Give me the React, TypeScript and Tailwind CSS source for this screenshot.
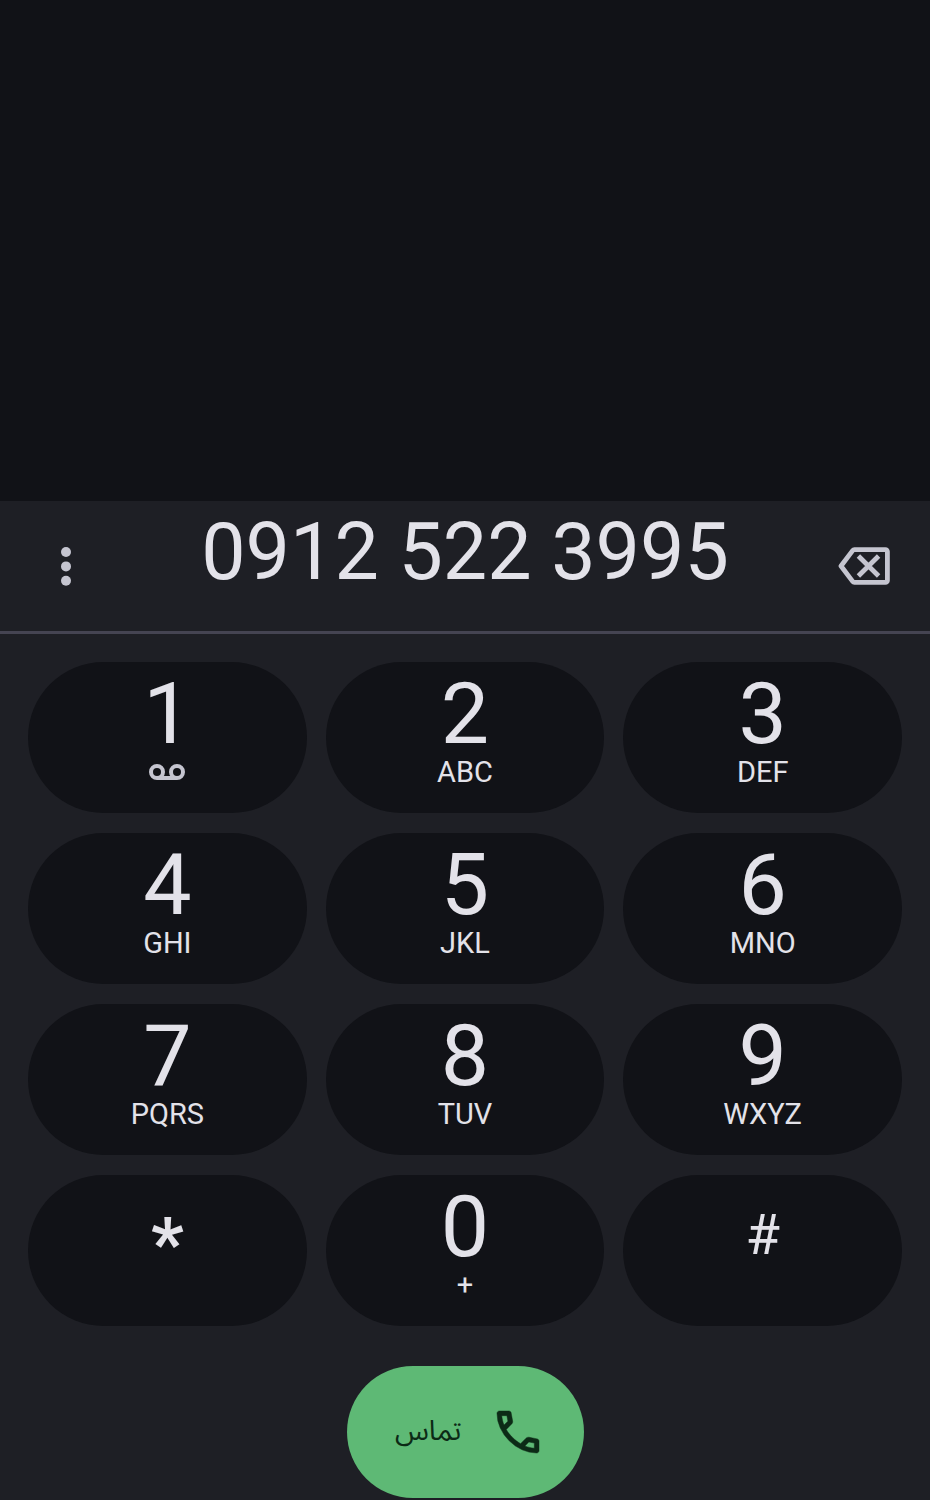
import React, { useState } from "react";

type Key = {
  digit: string;
  label?: React.ReactNode;
  name?: string;
};

const VoicemailIcon = () => (
  <svg
    className="h-4 w-9 text-[#c5c5d0]"
    viewBox="0 0 36 16"
    fill="none"
    stroke="currentColor"
    strokeWidth="4"
    aria-hidden="true"
  >
    <circle cx="8" cy="8" r="6" />
    <circle cx="28" cy="8" r="6" />
    <path d="M8 14h20" />
  </svg>
);

const MoreIcon = () => (
  <svg className="h-10 w-10" viewBox="0 0 40 40" fill="currentColor" aria-hidden="true">
    <circle cx="20" cy="6" r="5" />
    <circle cx="20" cy="20.4" r="5" />
    <circle cx="20" cy="34.8" r="5" />
  </svg>
);

const BackspaceIcon = () => (
  <svg
    className="h-[38px] w-[52px]"
    viewBox="0 0 52 38"
    fill="none"
    stroke="currentColor"
    strokeWidth="4.8"
    strokeLinejoin="round"
    aria-hidden="true"
  >
    <path d="M16.4 2.6H47.4a2 2 0 0 1 2 2V33.4a2 2 0 0 1-2 2H16.4a2 2 0 0 1-1.6-.8L3 19 14.8 3.4a2 2 0 0 1 1.6-.8Z" />
    <path d="M20.4 9 40.6 29M40.6 9 20.4 29" />
  </svg>
);

const CallIcon = () => (
  <svg className="h-14 w-14" viewBox="0 -960 960 960" fill="currentColor" aria-hidden="true">
    <path
      d="M798-120q-125 0-247-54.5T329-329Q229-429 174.5-551T120-798q0-18 12-30t30-12h162q14 0 25 9.5t13 22.5l26 140q2 16-1 27t-11 19l-97 98q20 37 47.5 71.5T387-386q31 31 65 57.5t72 48.5l94-94q9-9 23.5-13.5T670-390l138 28q14 4 23 14.5t9 23.5v162q0 18-12 30t-30 12ZM241-600l66-66-17-94h-89q5 41 14 81t26 79Zm358 358q39 17 79.5 27t81.5 13v-88l-94-19-67 67Z"
      stroke="currentColor"
      strokeWidth="8"
    />
  </svg>
);

const keys: Key[] = [
  { digit: "1", label: <VoicemailIcon /> },
  { digit: "2", label: "ABC" },
  { digit: "3", label: "DEF" },
  { digit: "4", label: "GHI" },
  { digit: "5", label: "JKL" },
  { digit: "6", label: "MNO" },
  { digit: "7", label: "PQRS" },
  { digit: "8", label: "TUV" },
  { digit: "9", label: "WXYZ" },
  { digit: "*", name: "star" },
  { digit: "0", label: "+" },
  { digit: "#", name: "pound" },
];

const symbolStyles: { [key: string]: string } = {
  "*": "pt-7 text-[72px] font-bold leading-[84px]",
  "#": "pt-5 text-[56px] leading-[80px]",
};

const App = () => {
  const [number, setNumber] = useState("0912 522 3995");

  return (
    <main className="flex min-h-screen flex-col bg-[#111217] font-['Roboto',sans-serif] text-[#e3e2e9]">
      <div className="flex-1" />

      <section className="bg-[#1e1f25] pb-0.5">
        {/* Number row */}
        <div className="flex h-[133px] items-center justify-between border-b-3 border-[#454452] px-[38px] text-[#c5c5d0]">
          <button type="button" aria-label="More options" className="flex w-14 justify-center">
            <MoreIcon />
          </button>
          <input
            type="tel"
            aria-label="Phone number"
            value={number}
            onChange={(e) => setNumber(e.target.value)}
            className="mb-7 h-24 min-w-0 flex-1 bg-transparent text-center text-[79px] text-[#e3e2e9] outline-none"
          />
          <button
            type="button"
            aria-label="Backspace"
            onClick={() => setNumber(number.slice(0, -1))}
            className="flex w-14 justify-center"
          >
            <BackspaceIcon />
          </button>
        </div>

        {/* Keypad */}
        <div className="grid grid-cols-3 gap-x-[19px] gap-y-5 px-7 pt-7">
          {keys.map((key) => (
            <button
              key={key.digit}
              type="button"
              aria-label={key.name}
              onClick={() => setNumber(number + key.digit)}
              className="flex h-[151px] flex-col items-center rounded-full bg-[#111217]"
            >
              {key.label ? (
                <>
                  <span className="pt-2.5 text-[86px] leading-[84px]">{key.digit}</span>
                  <span className="flex h-8 items-center text-[29px] leading-8">{key.label}</span>
                </>
              ) : (
                <span className={symbolStyles[key.digit]}>{key.digit}</span>
              )}
            </button>
          ))}
        </div>

        <div className="mt-10 flex justify-center">
          <button
            type="button"
            dir="rtl"
            lang="fa"
            className="flex h-[132px] w-[237px] items-center gap-7 rounded-full bg-[#5eb975] ps-[38px] text-[#0c2a16]"
          >
            <CallIcon />
            <span className="font-['Noto_Sans_Arabic','Noto_Sans','DejaVu_Sans',sans-serif] text-[28px]">
              تماس
            </span>
          </button>
        </div>
      </section>
    </main>
  );
};

export default App;
